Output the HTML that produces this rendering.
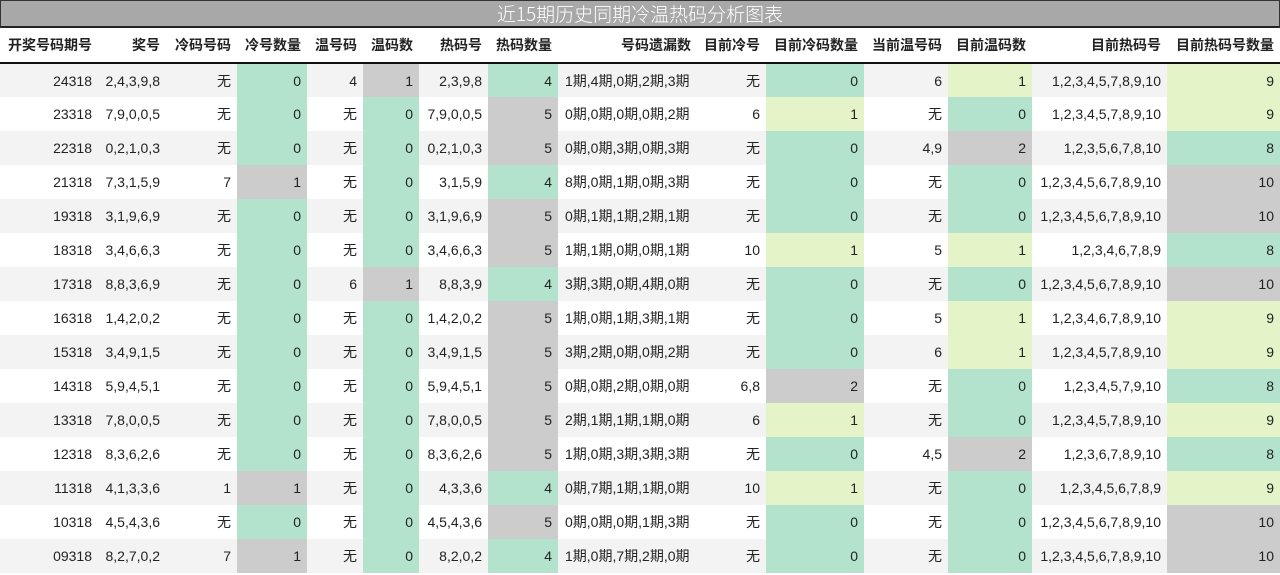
<!DOCTYPE html>
<html><head><meta charset="utf-8"><style>
*{margin:0;padding:0;box-sizing:border-box}
body{width:1280px;height:575px;overflow:hidden;background:#fff;font-family:"Liberation Sans","Noto Sans CJK SC",sans-serif;font-size:14px;color:#222}
.t{height:28px;background:#a8a8a8;border:1px solid #333;border-bottom:2px solid #222;color:#fff;text-align:center;font-size:19px;line-height:25px;font-family:"Noto Sans CJK SC",sans-serif;font-weight:300}
table{border-collapse:collapse;table-layout:fixed;width:1280px}
th{height:35px;font-weight:bold;text-align:right;padding:0 6px;border-bottom:2px solid #111;white-space:nowrap;font-family:"Liberation Sans","Noto Sans CJK SC",sans-serif}
td{height:34px;text-align:right;padding:0 6px;white-space:nowrap}
tr:nth-child(odd) td{background:#f3f3f3}
td.l{text-align:left;padding-left:7px}
tr td.g{background:#b3e3cc}
tr td.y{background:#e4f3c8}
tr td.s{background:#cccccc}
</style></head><body>
<div class="t">近15期历史同期冷温热码分析图表</div>
<table>
<colgroup><col style="width:98px"><col style="width:68px"><col style="width:71px"><col style="width:70px"><col style="width:56px"><col style="width:56px"><col style="width:69px"><col style="width:70px"><col style="width:139px"><col style="width:69px"><col style="width:98px"><col style="width:84px"><col style="width:84px"><col style="width:135px"><col style="width:113px"></colgroup>
<thead><tr><th>开奖号码期号</th><th>奖号</th><th>冷码号码</th><th>冷号数量</th><th>温号码</th><th>温码数</th><th>热码号</th><th>热码数量</th><th>号码遗漏数</th><th>目前冷号</th><th>目前冷码数量</th><th>当前温号码</th><th>目前温码数</th><th>目前热码号</th><th>目前热码号数量</th></tr></thead>
<tbody>
<tr><td>24318</td><td>2,4,3,9,8</td><td>无</td><td class="g">0</td><td>4</td><td class="s">1</td><td>2,3,9,8</td><td class="g">4</td><td class="l">1期,4期,0期,2期,3期</td><td>无</td><td class="g">0</td><td>6</td><td class="y">1</td><td>1,2,3,4,5,7,8,9,10</td><td class="y">9</td></tr>
<tr><td>23318</td><td>7,9,0,0,5</td><td>无</td><td class="g">0</td><td>无</td><td class="g">0</td><td>7,9,0,0,5</td><td class="s">5</td><td class="l">0期,0期,0期,0期,2期</td><td>6</td><td class="y">1</td><td>无</td><td class="g">0</td><td>1,2,3,4,5,7,8,9,10</td><td class="y">9</td></tr>
<tr><td>22318</td><td>0,2,1,0,3</td><td>无</td><td class="g">0</td><td>无</td><td class="g">0</td><td>0,2,1,0,3</td><td class="s">5</td><td class="l">0期,0期,3期,0期,3期</td><td>无</td><td class="g">0</td><td>4,9</td><td class="s">2</td><td>1,2,3,5,6,7,8,10</td><td class="g">8</td></tr>
<tr><td>21318</td><td>7,3,1,5,9</td><td>7</td><td class="s">1</td><td>无</td><td class="g">0</td><td>3,1,5,9</td><td class="g">4</td><td class="l">8期,0期,1期,0期,3期</td><td>无</td><td class="g">0</td><td>无</td><td class="g">0</td><td>1,2,3,4,5,6,7,8,9,10</td><td class="s">10</td></tr>
<tr><td>19318</td><td>3,1,9,6,9</td><td>无</td><td class="g">0</td><td>无</td><td class="g">0</td><td>3,1,9,6,9</td><td class="s">5</td><td class="l">0期,1期,1期,2期,1期</td><td>无</td><td class="g">0</td><td>无</td><td class="g">0</td><td>1,2,3,4,5,6,7,8,9,10</td><td class="s">10</td></tr>
<tr><td>18318</td><td>3,4,6,6,3</td><td>无</td><td class="g">0</td><td>无</td><td class="g">0</td><td>3,4,6,6,3</td><td class="s">5</td><td class="l">1期,1期,0期,0期,1期</td><td>10</td><td class="y">1</td><td>5</td><td class="y">1</td><td>1,2,3,4,6,7,8,9</td><td class="g">8</td></tr>
<tr><td>17318</td><td>8,8,3,6,9</td><td>无</td><td class="g">0</td><td>6</td><td class="s">1</td><td>8,8,3,9</td><td class="g">4</td><td class="l">3期,3期,0期,4期,0期</td><td>无</td><td class="g">0</td><td>无</td><td class="g">0</td><td>1,2,3,4,5,6,7,8,9,10</td><td class="s">10</td></tr>
<tr><td>16318</td><td>1,4,2,0,2</td><td>无</td><td class="g">0</td><td>无</td><td class="g">0</td><td>1,4,2,0,2</td><td class="s">5</td><td class="l">1期,0期,1期,3期,1期</td><td>无</td><td class="g">0</td><td>5</td><td class="y">1</td><td>1,2,3,4,6,7,8,9,10</td><td class="y">9</td></tr>
<tr><td>15318</td><td>3,4,9,1,5</td><td>无</td><td class="g">0</td><td>无</td><td class="g">0</td><td>3,4,9,1,5</td><td class="s">5</td><td class="l">3期,2期,0期,0期,2期</td><td>无</td><td class="g">0</td><td>6</td><td class="y">1</td><td>1,2,3,4,5,7,8,9,10</td><td class="y">9</td></tr>
<tr><td>14318</td><td>5,9,4,5,1</td><td>无</td><td class="g">0</td><td>无</td><td class="g">0</td><td>5,9,4,5,1</td><td class="s">5</td><td class="l">0期,0期,2期,0期,0期</td><td>6,8</td><td class="s">2</td><td>无</td><td class="g">0</td><td>1,2,3,4,5,7,9,10</td><td class="g">8</td></tr>
<tr><td>13318</td><td>7,8,0,0,5</td><td>无</td><td class="g">0</td><td>无</td><td class="g">0</td><td>7,8,0,0,5</td><td class="s">5</td><td class="l">2期,1期,1期,1期,0期</td><td>6</td><td class="y">1</td><td>无</td><td class="g">0</td><td>1,2,3,4,5,7,8,9,10</td><td class="y">9</td></tr>
<tr><td>12318</td><td>8,3,6,2,6</td><td>无</td><td class="g">0</td><td>无</td><td class="g">0</td><td>8,3,6,2,6</td><td class="s">5</td><td class="l">1期,0期,3期,3期,3期</td><td>无</td><td class="g">0</td><td>4,5</td><td class="s">2</td><td>1,2,3,6,7,8,9,10</td><td class="g">8</td></tr>
<tr><td>11318</td><td>4,1,3,3,6</td><td>1</td><td class="s">1</td><td>无</td><td class="g">0</td><td>4,3,3,6</td><td class="g">4</td><td class="l">0期,7期,1期,1期,0期</td><td>10</td><td class="y">1</td><td>无</td><td class="g">0</td><td>1,2,3,4,5,6,7,8,9</td><td class="y">9</td></tr>
<tr><td>10318</td><td>4,5,4,3,6</td><td>无</td><td class="g">0</td><td>无</td><td class="g">0</td><td>4,5,4,3,6</td><td class="s">5</td><td class="l">0期,0期,0期,1期,3期</td><td>无</td><td class="g">0</td><td>无</td><td class="g">0</td><td>1,2,3,4,5,6,7,8,9,10</td><td class="s">10</td></tr>
<tr><td>09318</td><td>8,2,7,0,2</td><td>7</td><td class="s">1</td><td>无</td><td class="g">0</td><td>8,2,0,2</td><td class="g">4</td><td class="l">1期,0期,7期,2期,0期</td><td>无</td><td class="g">0</td><td>无</td><td class="g">0</td><td>1,2,3,4,5,6,7,8,9,10</td><td class="s">10</td></tr>
</tbody></table>
</body></html>
